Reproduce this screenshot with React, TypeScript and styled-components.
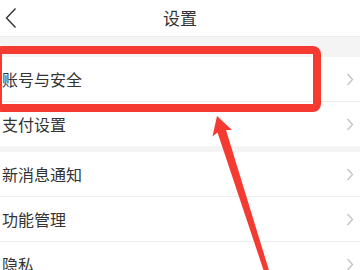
import React from "react";
import styled, { createGlobalStyle } from "styled-components";

const Global = createGlobalStyle`
  html, body { margin: 0; padding: 0; background: #f4f4f4; }
  body { font-family: "Noto Sans CJK SC", "Noto Sans", sans-serif; }
`;

const Page = styled.div`
  position: relative;
  width: 360px;
  height: 270px;
  overflow: hidden;
  background: #f4f4f4;
`;

const Header = styled.header`
  display: grid;
  grid-template-columns: 40px 1fr 40px;
  align-items: center;
  height: 36px;
  background: #fff;
  border-bottom: 1px solid #ededed;
`;

const Back = styled.div`
  display: flex;
  align-items: center;
  padding-left: 5px;
  height: 100%;
`;

const Title = styled.h1`
  margin: 0;
  text-align: center;
  font-size: 17px;
  font-weight: 400;
  color: #333;
  line-height: 36px;
`;

const Group = styled.section<{ $gap: number }>`
  margin-top: ${(p) => p.$gap}px;
  background: #fff;
  display: flex;
  flex-direction: column;
`;

const Row = styled.div`
  display: flex;
  align-items: center;
  justify-content: space-between;
  height: 44px;
  padding: 0 6px 0 2px;
  font-size: 16px;
  color: #333;
  & + & {
    border-top: 1px solid #ededed;
  }
`;

const Highlight = styled.div`
  position: absolute;
  left: -6px;
  top: 46px;
  width: 311px;
  height: 50px;
  border: 8px solid #f53a31;
  border-radius: 8px;
  pointer-events: none;
`;

const ArrowLayer = styled.svg`
  position: absolute;
  left: 0;
  top: 0;
  pointer-events: none;
`;

const Chevron = () => (
  <svg width="8" height="13" viewBox="0 0 8 13">
    <path d="M1.5 1 L6.5 6.5 L1.5 12" fill="none" stroke="#c2c2c2" strokeWidth="1.3" />
  </svg>
);

const items1 = ["账号与安全", "支付设置"];
const items2 = ["新消息通知", "功能管理", "隐私"];

export default function App() {
  return (
    <Page>
      <Global />
      <Header>
        <Back>
          <svg width="12" height="22" viewBox="0 0 12 22">
            <path d="M10.5 1.5 L1.5 11 L10.5 20.5" fill="none" stroke="#333" strokeWidth="1.4" />
          </svg>
        </Back>
        <Title>设置</Title>
        <div />
      </Header>
      <Group $gap={20}>
        {items1.map((t) => (
          <Row key={t}>
            <span>{t}</span>
            <Chevron />
          </Row>
        ))}
      </Group>
      <Group $gap={6}>
        {items2.map((t) => (
          <Row key={t}>
            <span>{t}</span>
            <Chevron />
          </Row>
        ))}
      </Group>
      <Highlight />
      <ArrowLayer width="360" height="270" viewBox="0 0 360 270">
        <polygon
          fill="#f53a31"
          points="217,116 232,130 226,130 269.5,272 264.5,273 217.5,132.5 212.5,136.5"
        />
      </ArrowLayer>
    </Page>
  );
}
